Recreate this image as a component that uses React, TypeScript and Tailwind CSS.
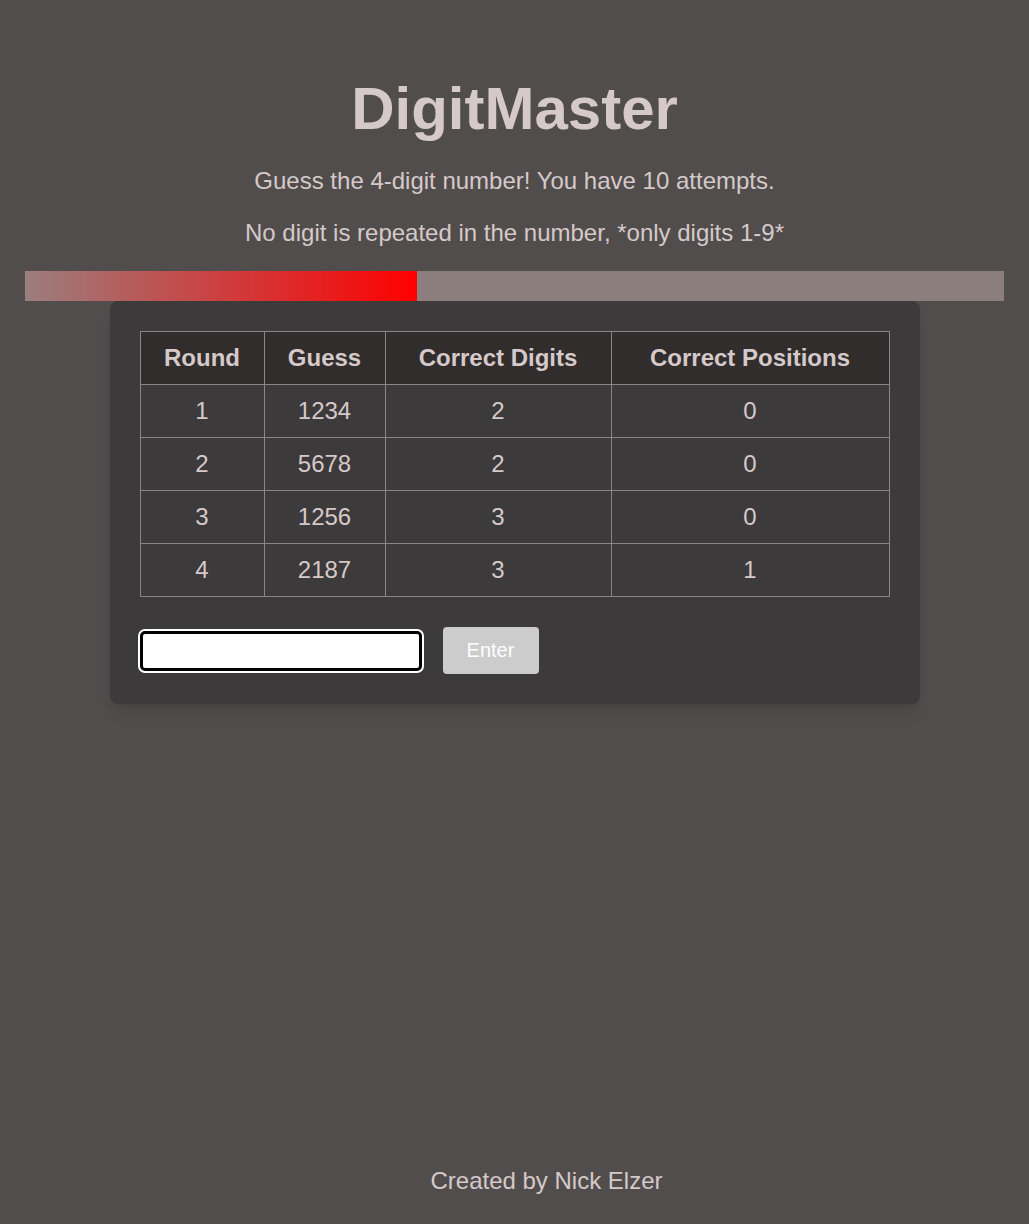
const rows = [
  { round: 1, guess: "1234", digits: 2, positions: 0 },
  { round: 2, guess: "5678", digits: 2, positions: 0 },
  { round: 3, guess: "1256", digits: 3, positions: 0 },
  { round: 4, guess: "2187", digits: 3, positions: 1 },
];

const App = () => {
  const progress = (rows.length / 10) * 100;
  return (
    <div className="min-h-screen flex flex-col bg-[#514d4c] text-[#d5c9ca] font-['Liberation_Sans',Arial,sans-serif]">
      <div className="pt-[74px] text-center">
        <h1 className="text-[60px] leading-[69px] font-bold">DigitMaster</h1>
        <p className="mt-[24px] text-[24px] leading-[28px]">Guess the 4-digit number! You have 10 attempts.</p>
        <p className="mt-[24px] text-[24px] leading-[28px]">No digit is repeated in the number, *only digits 1-9*</p>
      </div>
      <div className="mt-[24px] mx-[25px] h-[30px] bg-[#8c7e7d]">
        <div className="h-full bg-linear-to-r/srgb from-[#9b7e7e] to-[#ff0000]" style={{ width: `${progress}%` }} />
      </div>
      <div className="mx-auto w-[810px] p-[30px] bg-[#3d3a3b] rounded-lg shadow-lg">
        <table className="w-full border-collapse text-[24px] leading-[28px] text-center">
          <thead>
            <tr className="bg-[#302d2c]">
              <th className="w-[124px] border border-[#8f8383] py-[12px] font-bold">Round</th>
              <th className="w-[121px] border border-[#8f8383] py-[12px] font-bold">Guess</th>
              <th className="w-[226px] border border-[#8f8383] py-[12px] font-bold">Correct Digits</th>
              <th className="border border-[#8f8383] py-[12px] font-bold">Correct Positions</th>
            </tr>
          </thead>
          <tbody>
            {rows.map((r) => (
              <tr key={r.round}>
                <td className="border border-[#8f8383] py-[12px]">{r.round}</td>
                <td className="border border-[#8f8383] py-[12px]">{r.guess}</td>
                <td className="border border-[#8f8383] py-[12px]">{r.digits}</td>
                <td className="border border-[#8f8383] py-[12px]">{r.positions}</td>
              </tr>
            ))}
          </tbody>
        </table>
        <div className="mt-[30px] flex items-center gap-[21px]">
          <input
            type="text"
            className="w-[282px] h-[40px] bg-white border-[3px] border-black rounded-[5px] ring-2 ring-white outline-none text-black text-[20px] px-2"
          />
          <button className="w-[96px] h-[47px] bg-[#cccccc] text-white text-[20px] leading-[45px] rounded-[4px]">Enter</button>
        </div>
      </div>
      <footer className="mt-auto pb-[29px] pl-[64px] text-center text-[24px] leading-[28px]">Created by Nick Elzer</footer>
    </div>
  );
};

export default App;
